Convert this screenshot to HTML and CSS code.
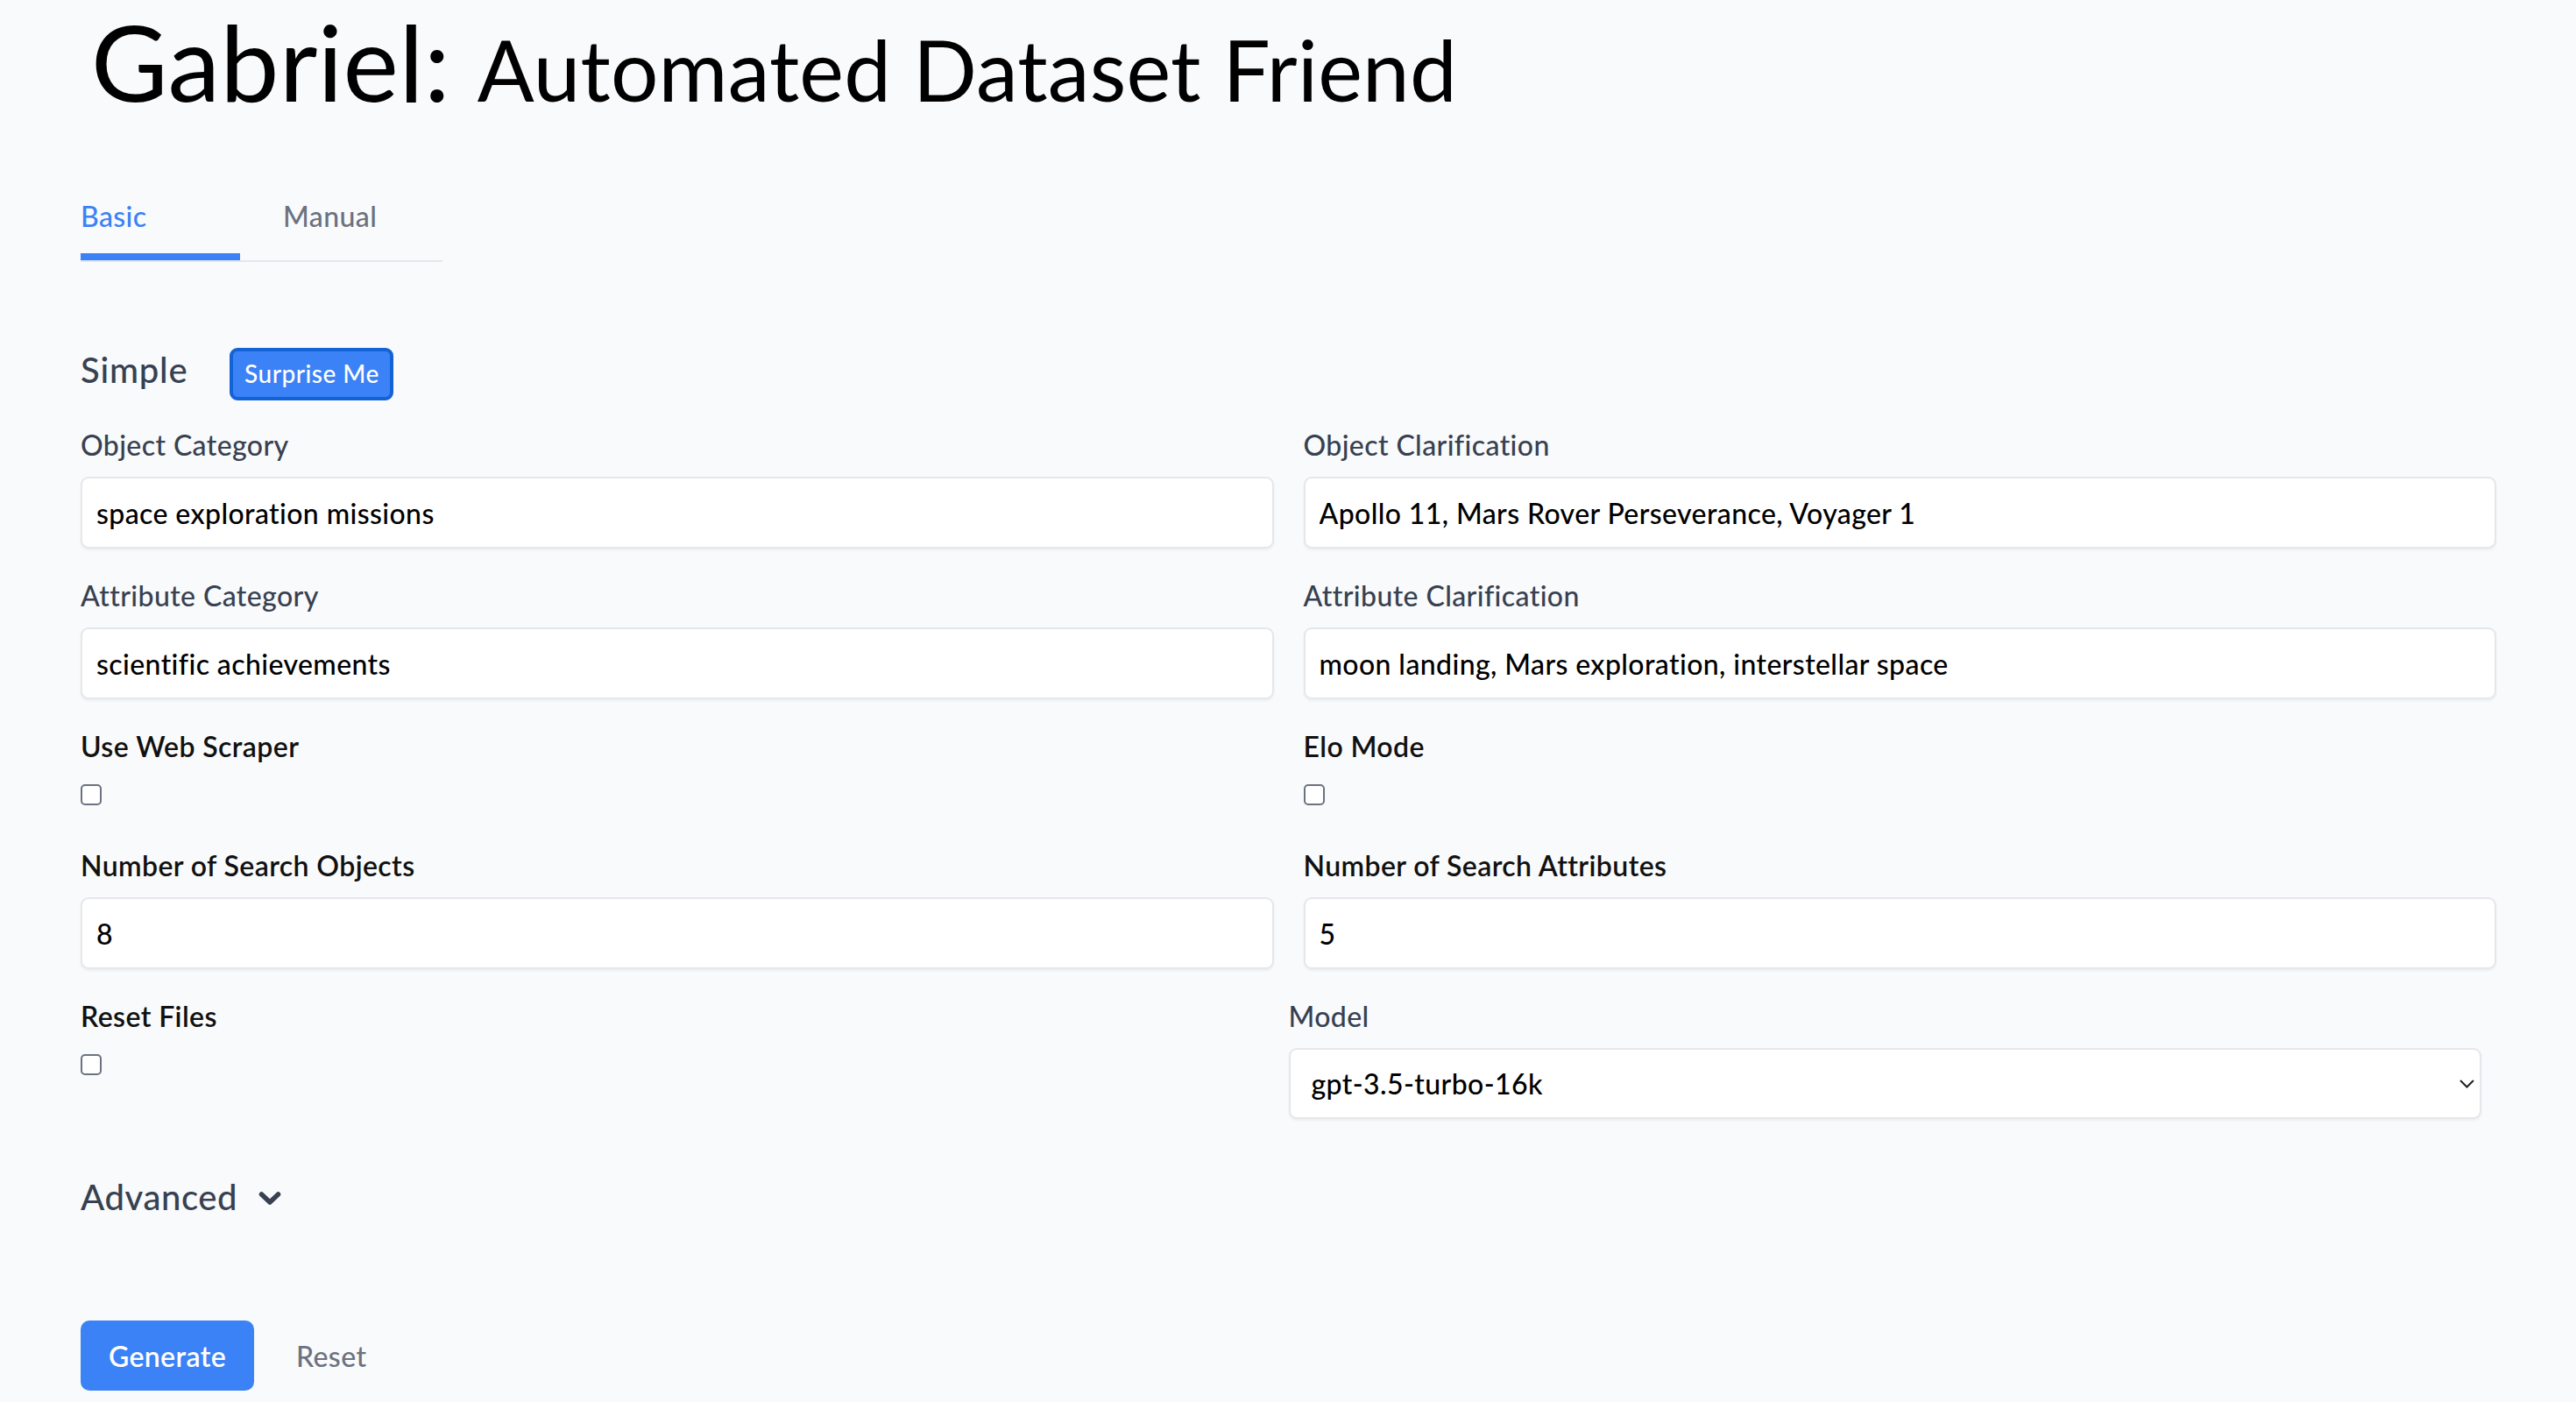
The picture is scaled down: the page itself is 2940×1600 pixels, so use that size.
FILE: index.html
```
<!DOCTYPE html>
<html lang="en">
<head>
<meta charset="utf-8">
<title>Gabriel: Automated Dataset Friend</title>
<link rel="stylesheet" href="styles.css">
</head>
<body>
<div class="page">
  <h1 class="title">Gabriel: <span class="title-sub">Automated Dataset Friend</span></h1>

  <div class="tabs">
    <div class="tab tab-active">Basic</div>
    <div class="tab tab-second">Manual</div>
  </div>

  <section class="simple">
    <div class="section-head">
      <h2 class="section-title">Simple</h2>
      <button class="btn-surprise" type="button">Surprise Me</button>
    </div>

    <div class="grid">
      <div class="field">
        <label class="label">Object Category</label>
        <input class="input" type="text" value="space exploration missions">
      </div>
      <div class="field">
        <label class="label">Object Clarification</label>
        <input class="input" type="text" value="Apollo 11, Mars Rover Perseverance, Voyager 1">
      </div>

      <div class="field">
        <label class="label">Attribute Category</label>
        <input class="input" type="text" value="scientific achievements">
      </div>
      <div class="field">
        <label class="label">Attribute Clarification</label>
        <input class="input" type="text" value="moon landing, Mars exploration, interstellar space">
      </div>

      <div class="field">
        <label class="label label-dark">Use Web Scraper</label>
        <input class="checkbox" type="checkbox">
      </div>
      <div class="field">
        <label class="label label-dark">Elo Mode</label>
        <input class="checkbox" type="checkbox">
      </div>

      <div class="field">
        <label class="label label-dark">Number of Search Objects</label>
        <input class="input" type="text" value="8">
      </div>
      <div class="field">
        <label class="label label-dark">Number of Search Attributes</label>
        <input class="input" type="text" value="5">
      </div>

      <div class="field">
        <label class="label label-dark">Reset Files</label>
        <input class="checkbox" type="checkbox">
      </div>
      <div class="field field-model">
        <label class="label">Model</label>
        <div class="select-wrap">
          <select class="select">
            <option>gpt-3.5-turbo-16k</option>
          </select>
          <svg class="select-chevron" width="17" height="10" viewBox="0 0 17 10" aria-hidden="true">
            <path d="M1 1 L8.5 8.5 L16 1" fill="none" stroke="#1f2328" stroke-width="2"/>
          </svg>
        </div>
      </div>
    </div>
  </section>

  <div class="advanced">
    <span class="advanced-title">Advanced</span>
    <svg class="advanced-chevron" width="26" height="18" viewBox="0 0 26 18" aria-hidden="true">
      <path d="M3.5 4 L13 13 L22.5 4" fill="none" stroke="#374151" stroke-width="5.5" stroke-linecap="round" stroke-linejoin="round"/>
    </svg>
  </div>

  <div class="actions">
    <button class="btn-generate" type="button">Generate</button>
    <button class="btn-reset" type="button">Reset</button>
  </div>
</div>
</body>
</html>
```
FILE: styles.css
```
* {
  box-sizing: border-box;
}

html, body {
  margin: 0;
  padding: 0;
  background: #f9fafb;
}

body {
  font-family: "Lato", "Noto Sans", "Liberation Sans", sans-serif;
  font-size: 32px;
  font-weight: 500;
  letter-spacing: 0.4px;
  color: #111827;
}

.page {
  padding: 0 91px 0 92px;
}

.title {
  margin: 0;
  padding: 10px 0 0 12px;
  font-family: "Lato", "Liberation Sans", sans-serif;
  font-weight: 400;
  font-size: 120px;
  line-height: 120px;
  letter-spacing: 0.2px;
  color: #000;
}

.title-sub {
  font-size: 96px;
  line-height: 1;
}

.tabs {
  display: inline-flex;
  margin-top: 93px;
  border-bottom: 2px solid #e5e7eb;
}

.tab {
  font-size: 32px;
  line-height: 48px;
  padding-bottom: 18px;
  border-bottom: 8px solid transparent;
  color: #6b7280;
}

.tab-active {
  width: 182px;
  color: #3b82f6;
  border-bottom-color: #3b82f6;
}

.tab-second {
  width: 231px;
  padding-left: 49px;
}

.simple {
  margin-top: 93px;
}

.section-head {
  display: flex;
  align-items: baseline;
  gap: 48px;
}

.section-title {
  margin: 0;
  font-size: 40px;
  line-height: 60px;
  font-weight: 500;
  letter-spacing: 0.8px;
  color: #374151;
}

.btn-surprise {
  width: 187px;
  height: 60px;
  padding: 5px 0 7px;
  font-family: inherit;
  font-size: 28px;
  font-weight: 500;
  letter-spacing: 0.5px;
  line-height: 40px;
  color: #fff;
  background: #3b82f6;
  border: 4px solid #1463d6;
  border-radius: 9px;
}

.grid {
  margin-top: 27px;
  display: grid;
  grid-template-columns: 1fr 1fr;
  column-gap: 34px;
  row-gap: 30px;
  align-items: start;
}

.field {
  display: flex;
  flex-direction: column;
  align-items: flex-start;
}

.field-model {
  margin-left: -17px;
  margin-right: 17px;
}

.label {
  display: block;
  font-size: 32px;
  line-height: 48px;
  color: #374151;
}

.label-dark {
  color: #111111;
  font-weight: 600;
}

.input {
  width: 100%;
  height: 82px;
  margin-top: 12px;
  padding: 0 16px;
  font-family: inherit;
  font-size: 32px;
  font-weight: 500;
  letter-spacing: 0.4px;
  color: #000;
  background: #fff;
  border: 2px solid #e5e7eb;
  border-radius: 9px;
  box-shadow: 0 2px 3px rgba(0, 0, 0, 0.05);
  outline: none;
}

.checkbox {
  appearance: none;
  -webkit-appearance: none;
  width: 24px;
  height: 24px;
  margin: 19px 0 15px;
  background: #fff;
  border: 2px solid #6b7280;
  border-radius: 5px;
}

.select-wrap {
  position: relative;
  width: 100%;
  margin-top: 12px;
}

.select {
  appearance: none;
  -webkit-appearance: none;
  display: block;
  width: 100%;
  height: 81px;
  padding: 0 24px;
  font-family: inherit;
  font-size: 32px;
  font-weight: 500;
  letter-spacing: 0.4px;
  color: #000;
  background: #fff;
  border: 2px solid #e5e7eb;
  border-radius: 9px;
  box-shadow: 0 2px 3px rgba(0, 0, 0, 0.05);
  outline: none;
}

.select-chevron {
  position: absolute;
  right: 8px;
  top: 36px;
}

.advanced {
  display: flex;
  align-items: center;
  gap: 24px;
  margin-top: 59px;
}

.advanced-title {
  font-size: 40px;
  line-height: 60px;
  letter-spacing: 0.6px;
  color: #374151;
}

.advanced-chevron {
  margin-top: 4px;
}

.actions {
  display: flex;
  align-items: center;
  gap: 48px;
  margin-top: 111px;
}

.btn-generate {
  width: 198px;
  height: 80px;
  padding: 0;
  font-family: inherit;
  font-size: 32px;
  font-weight: 600;
  letter-spacing: 0.4px;
  color: #fff;
  background: #3b82f6;
  border: none;
  border-radius: 10px;
}

.btn-reset {
  padding: 0;
  font-family: inherit;
  font-size: 32px;
  font-weight: 500;
  letter-spacing: 0.4px;
  color: #6b7280;
  background: none;
  border: none;
}
```
